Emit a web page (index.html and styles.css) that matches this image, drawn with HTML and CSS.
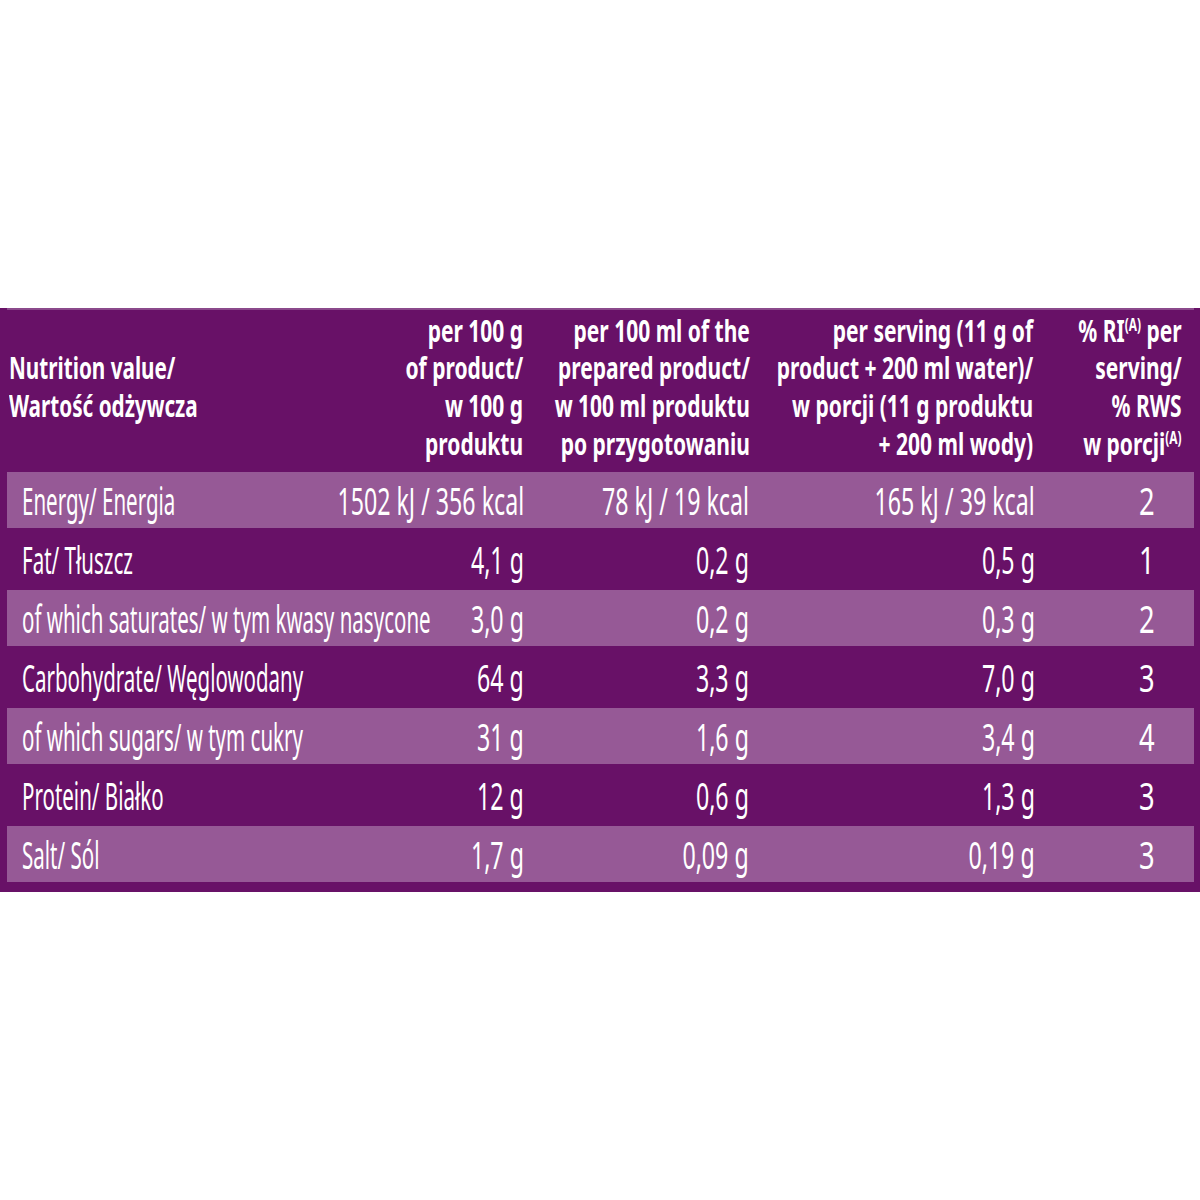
FILE: index.html
```html
<!DOCTYPE html>
<html lang="pl">
<head>
<meta charset="utf-8">
<title>Nutrition</title>
<link rel="stylesheet" href="styles.css">
</head>
<body>
<div class="panel">
  <div class="inner">
    <div class="head">
      <div class="hc hl"><span class="t">Nutrition value/<br>Wartość odżywcza</span></div>
      <div class="hc"><span class="t">per 100 g<br>of product/<br>w 100 g<br>produktu</span></div>
      <div class="hc"><span class="t">per 100 ml of the<br>prepared product/<br>w 100 ml produktu<br>po przygotowaniu</span></div>
      <div class="hc"><span class="t">per serving (11 g of<br>product + 200 ml water)/<br>w porcji (11 g produktu<br>+ 200 ml wody)</span></div>
      <div class="hc"><span class="t">% RI<sup>(A)</sup> per<br>serving/<br>% RWS<br>w porcji<sup>(A)</sup></span></div>
    </div>
    <div class="row light">
      <div class="c cl"><span class="t">Energy/ Energia</span></div>
      <div class="c"><span class="t">1502 kJ / 356 kcal</span></div>
      <div class="c"><span class="t">78 kJ / 19 kcal</span></div>
      <div class="c"><span class="t">165 kJ / 39 kcal</span></div>
      <div class="c cr"><span class="t">2</span></div>
    </div>
    <div class="row dark">
      <div class="c cl"><span class="t">Fat/ Tłuszcz</span></div>
      <div class="c"><span class="t">4,1 g</span></div>
      <div class="c"><span class="t">0,2 g</span></div>
      <div class="c"><span class="t">0,5 g</span></div>
      <div class="c cr"><span class="t">1</span></div>
    </div>
    <div class="row light">
      <div class="c cl"><span class="t">of which saturates/ w tym kwasy nasycone</span></div>
      <div class="c"><span class="t">3,0 g</span></div>
      <div class="c"><span class="t">0,2 g</span></div>
      <div class="c"><span class="t">0,3 g</span></div>
      <div class="c cr"><span class="t">2</span></div>
    </div>
    <div class="row dark">
      <div class="c cl"><span class="t">Carbohydrate/ Węglowodany</span></div>
      <div class="c"><span class="t">64 g</span></div>
      <div class="c"><span class="t">3,3 g</span></div>
      <div class="c"><span class="t">7,0 g</span></div>
      <div class="c cr"><span class="t">3</span></div>
    </div>
    <div class="row light">
      <div class="c cl"><span class="t">of which sugars/ w tym cukry</span></div>
      <div class="c"><span class="t">31 g</span></div>
      <div class="c"><span class="t">1,6 g</span></div>
      <div class="c"><span class="t">3,4 g</span></div>
      <div class="c cr"><span class="t">4</span></div>
    </div>
    <div class="row dark">
      <div class="c cl"><span class="t">Protein/ Białko</span></div>
      <div class="c"><span class="t">12 g</span></div>
      <div class="c"><span class="t">0,6 g</span></div>
      <div class="c"><span class="t">1,3 g</span></div>
      <div class="c cr"><span class="t">3</span></div>
    </div>
    <div class="row light">
      <div class="c cl"><span class="t">Salt/ Sól</span></div>
      <div class="c"><span class="t">1,7 g</span></div>
      <div class="c"><span class="t">0,09 g</span></div>
      <div class="c"><span class="t">0,19 g</span></div>
      <div class="c cr"><span class="t">3</span></div>
    </div>
  </div>
</div>
</body>
</html>
```
FILE: styles.css
```css
html, body {
  margin: 0;
  padding: 0;
  background: #ffffff;
}
body {
  width: 1200px;
  height: 1200px;
  padding-top: 308px;
  box-sizing: border-box;
  font-family: "Noto Sans", "DejaVu Sans", sans-serif;
  color: #ffffff;
}
.panel {
  background: #681167;
  padding: 0 6px 10px 7px;
}
.inner {
  border-top: 2px solid #8b4a8c;
}
.head {
  height: 162px;
  box-sizing: border-box;
  display: grid;
  grid-template-columns: 398px 116px 227px 283px 149px;
  padding: 0 12px 8px 2px;
  font-weight: 700;
  font-size: 30px;
  line-height: 37.7px;
  align-items: center;
}
.hc {
  text-align: right;
  white-space: nowrap;
  display: flex;
  justify-content: flex-end;
}
.hc.hl {
  justify-content: flex-start;
  text-align: left;
}
.hc .t {
  display: inline-block;
  transform: scaleX(0.7);
  transform-origin: right center;
}
.hc.hl .t {
  transform: scaleX(0.69);
  transform-origin: left center;
}
sup {
  font-size: 17px;
  line-height: 0;
  vertical-align: 11px;
}
.row {
  display: grid;
  grid-template-columns: 387px 115px 225px 286px 120px;
  padding: 0 39px 0 15px;
  align-items: center;
  font-size: 38px;
  white-space: nowrap;
}
.row.light {
  background: #965996;
  height: 56px;
}
.row.dark {
  height: 62px;
}
.c {
  display: flex;
  justify-content: flex-end;
}
.c .t {
  display: inline-block;
  transform: scaleX(0.61);
  transform-origin: right center;
}
.c.cl {
  justify-content: flex-start;
}
.c.cl .t {
  transform: scaleX(0.54);
  transform-origin: left center;
}
.c.cr .t {
  transform: scaleX(0.72);
}
```
